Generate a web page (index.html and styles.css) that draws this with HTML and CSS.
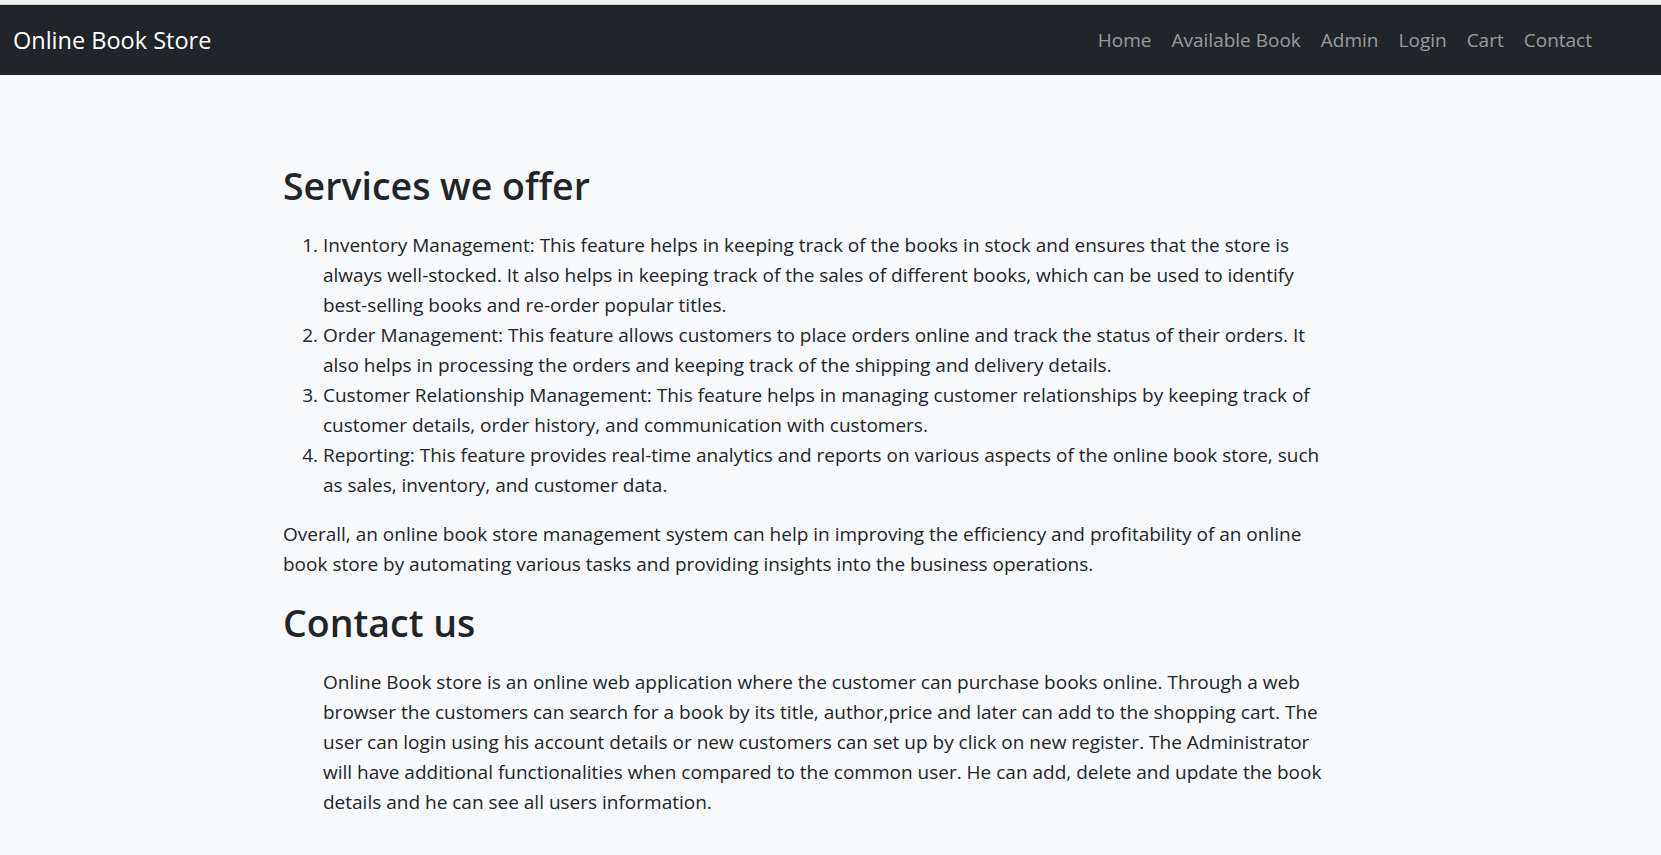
FILE: index.html
```html
<!DOCTYPE html>
<html lang="en">
<head>
<meta charset="utf-8">
<title>Online Book Store</title>
<link rel="stylesheet" href="styles.css">
</head>
<body>
<div class="topline"></div>
<nav class="navbar">
  <a class="brand" href="#">Online Book Store</a>
  <ul class="nav-links">
    <li><a href="#">Home</a></li>
    <li><a href="#">Available Book</a></li>
    <li><a href="#">Admin</a></li>
    <li><a href="#">Login</a></li>
    <li><a href="#">Cart</a></li>
    <li><a href="#">Contact</a></li>
  </ul>
</nav>
<main class="content">
  <h2 class="title">Services we offer</h2>
  <ol class="services">
    <li>Inventory Management: This feature helps in keeping track of the books in stock and ensures that the store is always well-stocked. It also helps in keeping track of the sales of different books, which can be used to identify best-selling books and re-order popular titles.</li>
    <li>Order Management: This feature allows customers to place orders online and track the status of their orders. It also helps in processing the orders and keeping track of the shipping and delivery details.</li>
    <li>Customer Relationship Management: This feature helps in managing customer relationships by keeping track of customer details, order history, and communication with customers.</li>
    <li>Reporting: This feature provides real-time analytics and reports on various aspects of the online book store, such as sales, inventory, and customer data.</li>
  </ol>
  <p class="text">Overall, an online book store management system can help in improving the efficiency and profitability of an online book store by automating various tasks and providing insights into the business operations.</p>
  <h2 class="title">Contact us</h2>
  <p class="text indented">Online Book store is an online web application where the customer can purchase books online. Through a web browser the customers can search for a book by its title, author,price and later can add to the shopping cart. The user can login using his account details or new customers can set up by click on new register. The Administrator will have additional functionalities when compared to the common user. He can add, delete and update the book details and he can see all users information.</p>
</main>
</body>
</html>
```

FILE: styles.css
```css
html, body {
  margin: 0;
  padding: 0;
  background: #f8f9fa;
}
body {
  font-family: "Open Sans", "Noto Sans", sans-serif;
  color: #212529;
}
.topline {
  height: 4px;
  background: #efefef;
  border-bottom: 1px solid #cfcfcf;
}
.navbar {
  height: 70px;
  background: #212529;
  display: flex;
  align-items: center;
  justify-content: space-between;
  padding: 0 59px 0 13px;
}
.brand {
  color: #ffffff;
  text-decoration: none;
  font-size: 23.5px;
  line-height: 30px;
}
.nav-links {
  list-style: none;
  display: flex;
  margin: 0;
  padding: 0;
}
.nav-links a {
  display: block;
  padding: 0 10px;
  color: rgba(255, 255, 255, 0.55);
  text-decoration: none;
  font-size: 19px;
  line-height: 30px;
}
.content {
  margin-left: 283px;
  width: 1050px;
  padding-top: 87px;
}
.title {
  font-size: 37.5px;
  line-height: 48px;
  font-weight: 600;
  margin: 0 0 20px;
  color: #212529;
}
.services {
  margin: 0 0 19px;
  padding-left: 40px;
  font-size: 19px;
  line-height: 30px;
}
.text {
  margin: 0 0 20px;
  font-size: 19px;
  line-height: 30px;
}
.indented {
  padding-left: 40px;
}
```
